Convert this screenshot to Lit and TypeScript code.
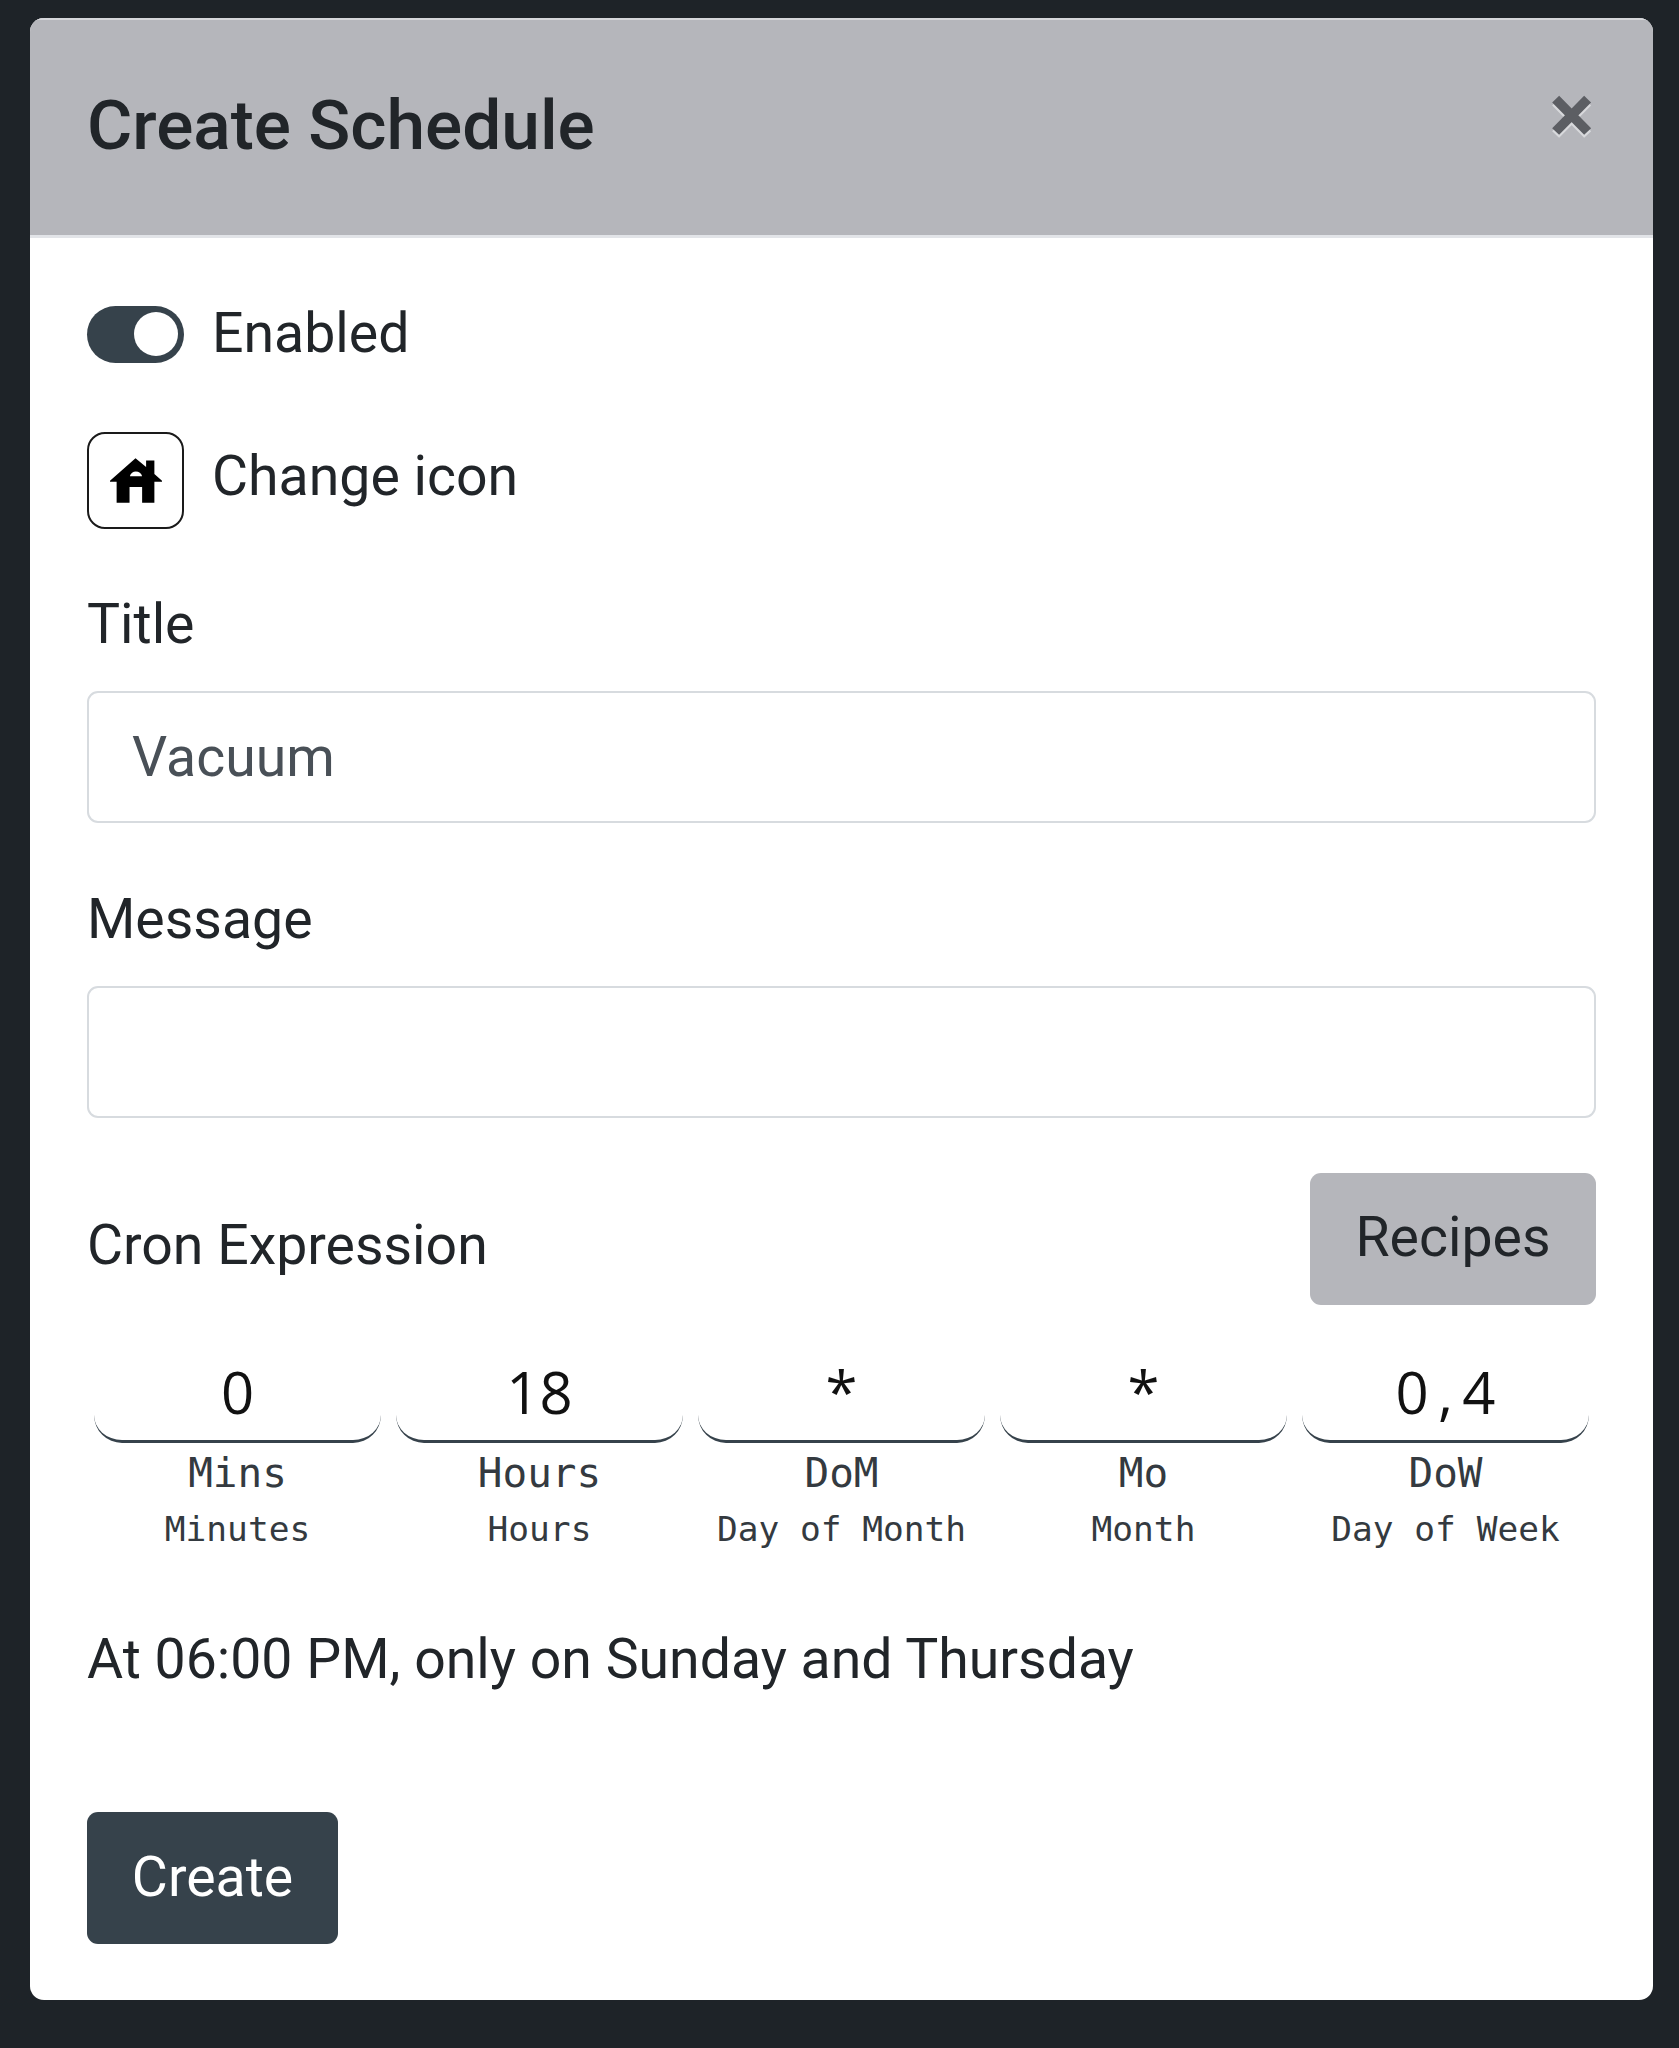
import { LitElement, html, css } from "lit";
import { customElement } from "lit/decorators.js";

const CRON = [
  ["0", "Mins", "Minutes"],
  ["18", "Hours", "Hours"],
  ["*", "DoM", "Day of Month"],
  ["*", "Mo", "Month"],
  ["0,4", "DoW", "Day of Week"],
];

@customElement("app-root")
export class AppRoot extends LitElement {
  static styles = css`
    :host {
      display: block;
      min-height: 2048px;
      background: #1e2328;
      padding: 18px 26px 0 30px;
      box-sizing: border-box;
      font-family: Roboto, "Liberation Sans", sans-serif;
      font-size: 55.4px;
      line-height: 1.5;
      color: #212529;
    }
    .modal {
      height: 1982px;
      background: #fff;
      border-radius: 14px;
      overflow: hidden;
      box-sizing: border-box;
    }
    .header {
      background: #b5b6bb;
      height: 220px;
      box-sizing: border-box;
      border-top: 2px solid #d5d6da;
      border-bottom: 3px solid #e2e4e8;
      padding: 54px 57px 0 57px;
      display: flex;
      justify-content: space-between;
      align-items: flex-start;
    }
    h5 {
      margin: 0;
      font-size: 69.4px;
      font-weight: 500;
      line-height: 1.5;
    }
    .close {
      font-size: 84px;
      font-weight: 700;
      line-height: 1;
      color: #5c5e63;
      text-shadow: 0 3px 0 #d8d9dc;
      margin-top: -1px;
      margin-right: 2px;
    }
    .body {
      padding: 54px 57px 0 57px;
    }
    .row {
      display: flex;
      align-items: center;
      gap: 28px;
    }
    .toggle {
      width: 97px;
      height: 57px;
      border-radius: 28.5px;
      background: #36424b;
      position: relative;
      flex: none;
      margin-top: 1px;
    }
    .toggle::after {
      content: "";
      position: absolute;
      top: 6.5px;
      right: 6px;
      width: 44px;
      height: 44px;
      border-radius: 50%;
      background: #fff;
    }
    .enabled {
      height: 83px;
    }
    .iconrow {
      margin-top: 57px;
      align-items: flex-start;
    }
    .iconbtn {
      width: 97px;
      height: 97px;
      box-sizing: border-box;
      border: 2px solid #1a1a1a;
      border-radius: 18px;
      display: flex;
      align-items: center;
      justify-content: center;
      flex: none;
    }
    .iconbtn svg {
      width: 52px;
      height: 45px;
      display: block;
    }
    .iconlabel {
      margin-top: 3px;
    }
    .field {
      display: block;
      margin-top: 55px;
    }
    .field + .field {
      margin-top: 56px;
    }
    label {
      display: block;
      margin-bottom: 25px;
      line-height: 82px;
    }
    input.text {
      display: block;
      width: 100%;
      height: 132px;
      box-sizing: border-box;
      padding: 0 43px;
      border: 2.5px solid #d7dbdf;
      border-radius: 11px;
      font: inherit;
      color: #495057;
      background: #fff;
      outline: none;
    }
    .cronhead {
      margin-top: 55px;
      display: flex;
      justify-content: space-between;
      align-items: flex-start;
    }
    .cronhead span {
      margin-top: 31px;
    }
    .recipes {
      width: 286px;
      height: 132px;
      box-sizing: border-box;
      background: #b5b6bb;
      color: #212529;
      border: none;
      border-radius: 11px;
      font: inherit;
      padding: 0 0 3px;
    }
    .cron {
      display: grid;
      grid-template-columns: repeat(5, 1fr);
      gap: 15px;
      margin: 47px 7px 0;
    }
    .cell {
      text-align: center;
      font-family: "DejaVu Sans Mono", monospace;
    }
    .value {
      height: 91px;
      box-sizing: border-box;
      border-bottom: 3px solid #36424b;
      border-radius: 0 0 28px 28px;
      font-family: "Open Sans", sans-serif;
      font-size: 58px;
      line-height: 80px;
      color: #111;
    }
    .ch {
      display: inline-block;
      width: 33.4px;
      text-align: center;
    }
    .short {
      font-size: 41px;
      line-height: 56px;
      color: #343a40;
      margin-top: 2px;
    }
    .long {
      font-size: 34.5px;
      line-height: 56px;
      color: #343a40;
      margin-top: 0;
    }
    .desc {
      margin-top: 62px;
      line-height: 82px;
    }
    .create {
      display: block;
      margin-top: 111px;
      width: 251px;
      height: 132px;
      box-sizing: border-box;
      background: #36424b;
      color: #fff;
      border: none;
      border-radius: 11px;
      font: inherit;
      padding: 0;
    }
  `;

  render() {
    return html`
      <div class="modal">
        <div class="header">
          <h5>Create Schedule</h5>
          <span class="close">×</span>
        </div>
        <div class="body">
          <div class="row enabled">
            <span class="toggle"></span>
            <span>Enabled</span>
          </div>
          <div class="row iconrow">
            <span class="iconbtn">
              <svg viewBox="88 485 157 135" aria-hidden="true">
                <path fill="#000" fill-rule="evenodd" d="M165 485 197 512V492H222V533L245 553V556H222V620H185V572H147V620H108V556H88V553ZM148 540C150 530 158 525 166 525 175 525 183 530 185 540Z"/>
              </svg>
            </span>
            <span class="iconlabel">Change icon</span>
          </div>
          <div class="field">
            <label>Title</label>
            <input class="text" .value=${"Vacuum"} />
          </div>
          <div class="field">
            <label>Message</label>
            <input class="text" />
          </div>
          <div class="cronhead">
            <span>Cron Expression</span>
            <button class="recipes">Recipes</button>
          </div>
          <div class="cron">
            ${CRON.map(
              ([v, s, l]) => html`
                <div class="cell">
                  <div class="value">${[...v].map((c) => html`<span class="ch">${c}</span>`)}</div>
                  <div class="short">${s}</div>
                  <div class="long">${l}</div>
                </div>
              `
            )}
          </div>
          <div class="desc">At 06:00 PM, only on Sunday and Thursday</div>
          <button class="create">Create</button>
        </div>
      </div>
    `;
  }
}
